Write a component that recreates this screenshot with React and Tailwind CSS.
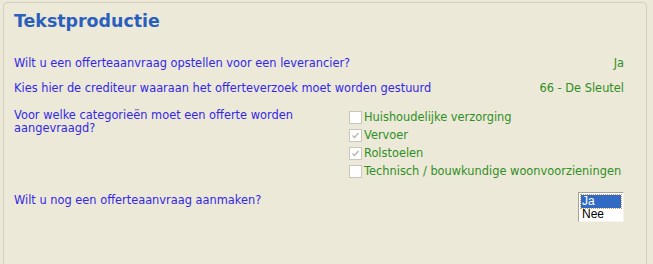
import React from "react";

const categories = [
    { label: "Huishoudelijke verzorging", checked: false },
    { label: "Vervoer", checked: true },
    { label: "Rolstoelen", checked: true },
    { label: "Technisch / bouwkundige woonvoorzieningen", checked: false },
];

const CheckBox = ({ checked }) => (
    <div className="w-[13px] h-[13px] border border-[#c9c7ba] bg-white flex items-center justify-center">
        {checked && (
            <svg width="9" height="9" viewBox="0 0 9 9">
                <path d="M1.5 4.5 L3.5 6.5 L7.5 2" fill="none" stroke="#b8b6aa" strokeWidth="1.3" />
            </svg>
        )}
    </div>
);

const App = () => {
    return (
        <div className="w-[653px] h-[264px] bg-[#ece9d8] pt-[2px] pl-[3px] overflow-hidden font-['DejaVu_Sans',Verdana,sans-serif]">
            <div className="w-[644px] h-[300px] border border-[#d3d0bf] rounded-[4px] pl-[10px] pr-[22px] pt-[6px]">
                {/* Title */}
                <h1 className="text-[17.4px] leading-[24px] font-bold text-[#2b5fbe]">Tekstproductie</h1>

                <div className="mt-[24px] text-[11.4px] leading-[13px]">
                    <div className="flex justify-between">
                        <span className="text-[#3328ea]">Wilt u een offerteaanvraag opstellen voor een leverancier?</span>
                        <span className="text-[#2f8f24]">Ja</span>
                    </div>

                    <div className="flex justify-between mt-[12px]">
                        <span className="text-[#3328ea]">Kies hier de crediteur waaraan het offerteverzoek moet worden gestuurd</span>
                        <span className="text-[#2f8f24]">66 - De Sleutel</span>
                    </div>

                    {/* Categories */}
                    <div className="flex mt-[13px]">
                        <div className="w-[335px] pr-[30px] text-[#3328ea] pt-px">
                            Voor welke categorieën moet een offerte worden aangevraagd?
                        </div>
                        <div className="flex flex-col">
                            {categories.map((c) => (
                                <div key={c.label} className="h-[18px] flex items-center gap-[2px]">
                                    <CheckBox checked={c.checked} />
                                    <span className="text-[#2f8f24]">{c.label}</span>
                                </div>
                            ))}
                        </div>
                    </div>

                    <div className="flex justify-between items-start mt-[12px]">
                        <span className="text-[#3328ea] mt-[2px]">Wilt u nog een offerteaanvraag aanmaken?</span>
                        <div className="w-[46px] h-[30px] bg-white border border-t-[#a5a39a] border-l-[#a5a39a] border-r-[#f4f3ee] border-b-[#f4f3ee] p-[2px] text-[12px] leading-[13px] font-['Liberation_Sans',Arial,sans-serif]">
                            <div className="bg-[#316ac5] text-white px-px outline-1 outline-dotted outline-[#c8a050]">Ja</div>
                            <div className="text-black px-px">Nee</div>
                        </div>
                    </div>
                </div>
            </div>
        </div>
    );
};

export default App;
